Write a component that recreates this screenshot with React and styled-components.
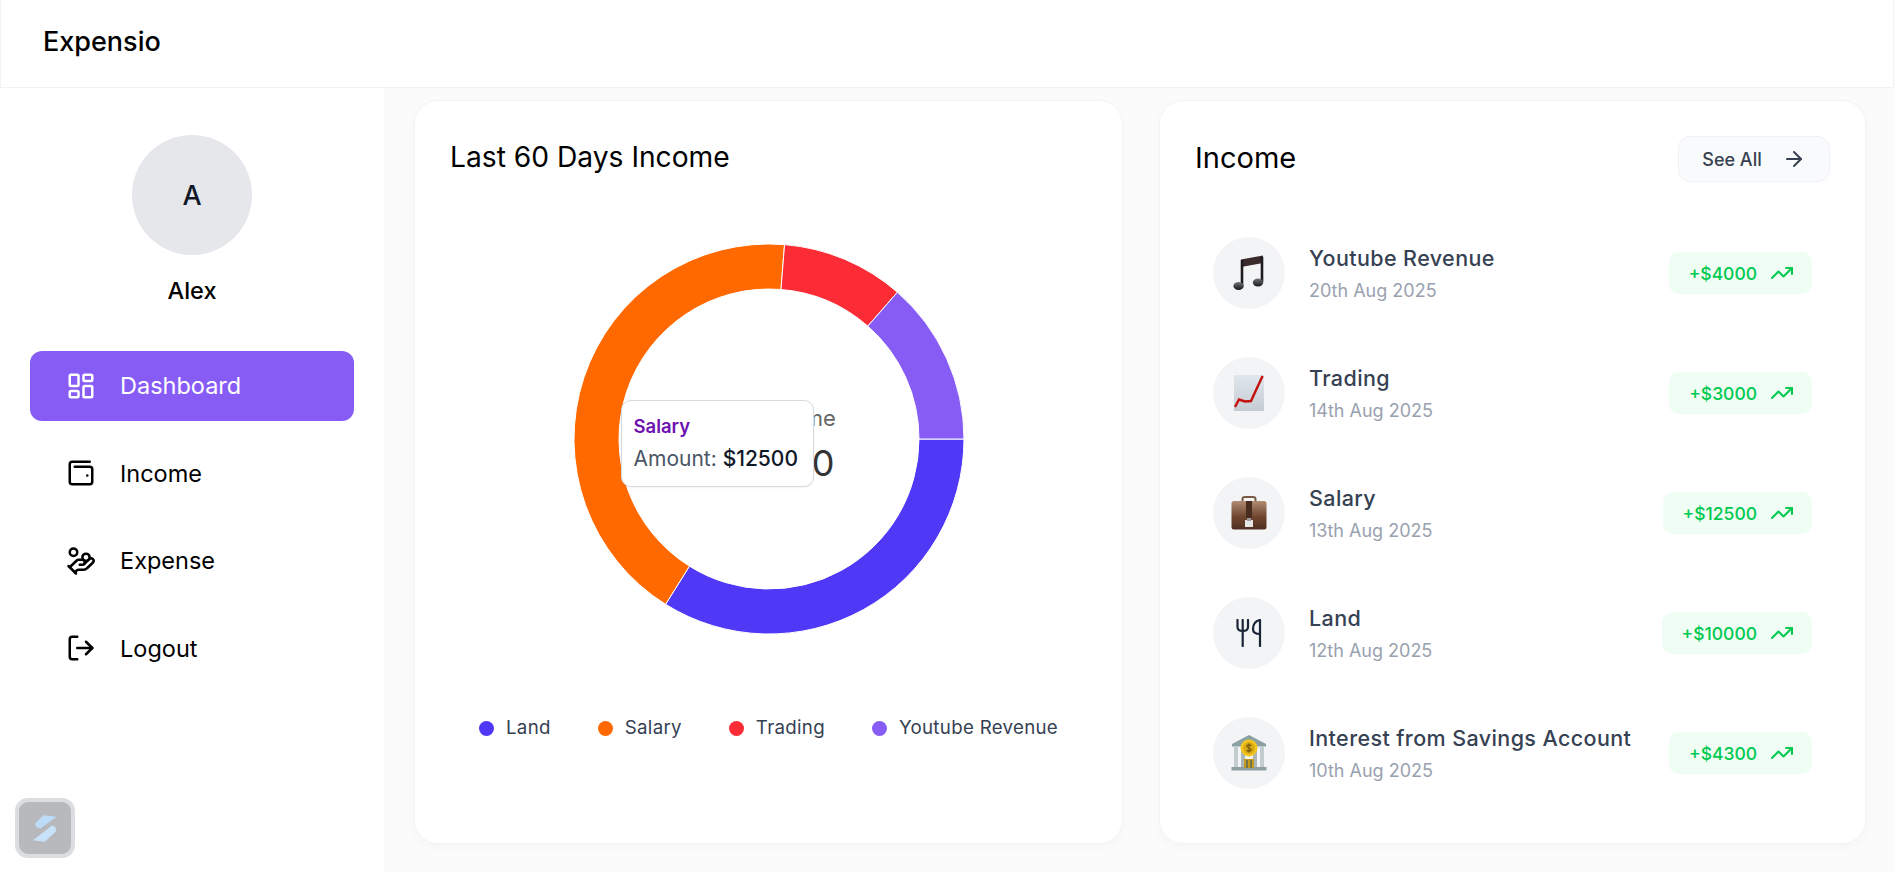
import React from 'react'
import styled, { createGlobalStyle } from 'styled-components'
import { LayoutDashboard, WalletMinimal, HandCoins, LogOut, ArrowRight, TrendingUp } from 'lucide-react'

const GlobalStyle = createGlobalStyle`
  * { box-sizing: border-box; }
  body {
    margin: 0;
    background: #fcfbfc;
    font-family: Inter, "Open Sans", sans-serif;
    overflow: hidden;
  }
`

const slices = [
  { name: 'Land', value: 10000, color: '#4f39f6' },
  { name: 'Salary', value: 12500, color: '#ff6900' },
  { name: 'Trading', value: 3000, color: '#fb2c36' },
  { name: 'Youtube Revenue', value: 4000, color: '#875cf5' },
]

const navItems = [
  { label: 'Dashboard', Icon: LayoutDashboard, active: true },
  { label: 'Income', Icon: WalletMinimal },
  { label: 'Expense', Icon: HandCoins },
  { label: 'Logout', Icon: LogOut },
]

function MusicIcon() {
  return (
    <svg width="32" height="38" viewBox="0 0 32 38">
      <defs>
        <linearGradient id="noteHead" x1="0" y1="0" x2="0" y2="1">
          <stop offset="0" stopColor="#6f7478" />
          <stop offset="1" stopColor="#15171a" />
        </linearGradient>
      </defs>
      <path d="M8 5.5 L30 1.5 V9 L8 13 Z" fill="#3a2a2c" />
      <path d="M9 6 V31 M29 3 V28" stroke="#1d1b1d" strokeWidth="2.6" fill="none" />
      <ellipse cx="5.6" cy="32" rx="5.2" ry="4" fill="url(#noteHead)" />
      <ellipse cx="25" cy="28.5" rx="5.2" ry="4" fill="url(#noteHead)" />
    </svg>
  )
}

function ChartIcon() {
  return (
    <svg width="32" height="36" viewBox="0 0 32 36">
      <defs>
        <linearGradient id="chartPaper" x1="0" y1="0" x2="0" y2="1">
          <stop offset="0" stopColor="#dfe6ec" />
          <stop offset="1" stopColor="#c6ccd3" />
        </linearGradient>
      </defs>
      <rect x="1" y="0" width="30" height="36" fill="url(#chartPaper)" />
      <path d="M2 32 L6 24.5 L12 26.5 L18 26 L24 13 L29.6 1" fill="none" stroke="#c4100c" strokeWidth="2.4" />
    </svg>
  )
}

function BriefcaseIcon() {
  return (
    <svg width="36" height="34" viewBox="0 0 36 34">
      <defs>
        <linearGradient id="caseBody" x1="0" y1="0" x2="0" y2="1">
          <stop offset="0" stopColor="#b08c72" />
          <stop offset="0.55" stopColor="#6f4630" />
          <stop offset="1" stopColor="#4f2f1f" />
        </linearGradient>
      </defs>
      <path d="M11.5 6 V3 Q11.5 1 14 1 H22 Q24.5 1 24.5 3 V6" fill="none" stroke="#7b5a45" strokeWidth="2" />
      <rect x="0.5" y="5" width="35" height="28.5" rx="2.5" fill="url(#caseBody)" />
      <rect x="15" y="5" width="6" height="17" fill="#4a2c1e" />
      <path d="M14 24 H22 V31 H14 Z" fill="#e6e6e6" />
      <rect x="16" y="22" width="4" height="3" fill="#9b9b9b" />
    </svg>
  )
}

function ForkIcon() {
  return (
    <svg width="26" height="28" viewBox="0 0 26 28">
      <path d="M1.5 1 V8 Q1.5 12 6.7 12 Q12 12 12 8 V1 M6.7 1 V27" fill="none" stroke="#1b2538" strokeWidth="2.2" strokeLinecap="round" />
      <path d="M24 1 V27 M24 1 Q17 2.5 17 10 Q17 15 24 15" fill="none" stroke="#1b2538" strokeWidth="2.2" strokeLinecap="round" />
    </svg>
  )
}

function BankIcon() {
  return (
    <svg width="36" height="36" viewBox="0 0 36 36">
      <path d="M18 0 L35 9 V11.5 H1 V9 Z" fill="#8ba0a3" />
      <rect x="3" y="12" width="4" height="20" fill="#c3cdd0" />
      <rect x="10" y="12" width="4" height="20" fill="#aab7ba" />
      <rect x="22" y="12" width="4" height="20" fill="#aab7ba" />
      <rect x="29" y="12" width="4" height="20" fill="#c3cdd0" />
      <rect x="0.5" y="32" width="35" height="3.5" fill="#8e9ea1" />
      <rect x="13" y="24" width="10" height="9" fill="#c49a1a" />
      <path d="M16 25 V33 M20 25 V33" stroke="#5a6a5a" strokeWidth="1.5" />
      <circle cx="18" cy="13" r="8.5" fill="#f2c51f" />
      <circle cx="18" cy="13" r="6" fill="#dcab14" />
      <path d="M20.4 10.6 Q18 9.2 16.2 10.4 Q15 11.8 18 13 Q21 14.2 19.8 15.8 Q17.8 16.9 15.6 15.4 M18 8.6 V17.4" fill="none" stroke="#7a5d10" strokeWidth="1.3" />
    </svg>
  )
}

const incomes = [
  { title: 'Youtube Revenue', date: '20th Aug 2025', amount: '+$4000', Emoji: MusicIcon },
  { title: 'Trading', date: '14th Aug 2025', amount: '+$3000', Emoji: ChartIcon },
  { title: 'Salary', date: '13th Aug 2025', amount: '+$12500', Emoji: BriefcaseIcon },
  { title: 'Land', date: '12th Aug 2025', amount: '+$10000', Emoji: ForkIcon },
  { title: 'Interest from Savings Account', date: '10th Aug 2025', amount: '+$4300', Emoji: BankIcon },
]

// recharts-like donut, starts at 3 o'clock and runs clockwise
function arcPath(startDeg, endDeg, outer, inner, cx, cy) {
  const rad = (d) => (d * Math.PI) / 180
  const pt = (r, d) => `${(cx + r * Math.cos(rad(d))).toFixed(2)} ${(cy + r * Math.sin(rad(d))).toFixed(2)}`
  const large = endDeg - startDeg > 180 ? 1 : 0
  return `M${pt(outer, startDeg)} A${outer} ${outer} 0 ${large} 1 ${pt(outer, endDeg)} L${pt(inner, endDeg)} A${inner} ${inner} 0 ${large} 0 ${pt(inner, startDeg)} Z`
}

function Donut() {
  const total = slices.reduce((sum, s) => sum + s.value, 0)
  let angle = 0
  return (
    <DonutSvg width="420" height="418" viewBox="0 0 420 418">
      {slices.map((s) => {
        const start = angle
        angle += (s.value / total) * 360
        return <path key={s.name} d={arcPath(start, angle, 195, 150, 210, 209)} fill={s.color} stroke="#fff" strokeWidth="1" />
      })}
      <CenterLabel x="210" y="196" textAnchor="middle">Total Income</CenterLabel>
      <CenterValue x="210" y="246" textAnchor="middle">$29500</CenterValue>
    </DonutSvg>
  )
}

export default function App() {
  return (
    <>
      <GlobalStyle />
      <Page>
        <Header>
          <Brand>Expensio</Brand>
        </Header>
        <Body>
          <Sidebar>
            <Avatar>A</Avatar>
            <UserName>Alex</UserName>
            <Nav>
              {navItems.map(({ label, Icon, active }) => (
                <NavItem key={label} $active={active}>
                  <Icon size={30} strokeWidth={2} />
                  {label}
                </NavItem>
              ))}
            </Nav>
            <DevBadge>
              <svg width="34" height="38" viewBox="0 0 34 38">
                <path d="M14 1 L32 3 L10 19 Q2 17 3 12 Z" fill="#bcdcf8" />
                <path d="M26 15 Q33 17 31 23 L16 37 L0 35 Z" fill="#c8e2fa" />
              </svg>
            </DevBadge>
          </Sidebar>
          <Main>
            <Card>
              <ChartTitle>Last 60 Days Income</ChartTitle>
              <ChartWrap>
                <Donut />
                <Tooltip>
                  <TooltipName>Salary</TooltipName>
                  <TooltipLine>Amount: <b>$12500</b></TooltipLine>
                </Tooltip>
              </ChartWrap>
              <Legend>
                {slices.map((s) => (
                  <LegendItem key={s.name}>
                    <Dot $color={s.color} />
                    {s.name}
                  </LegendItem>
                ))}
              </Legend>
            </Card>
            <Card>
              <CardHead>
                <CardTitle>Income</CardTitle>
                <SeeAll>See All <ArrowRight size={24} strokeWidth={2} /></SeeAll>
              </CardHead>
              <List>
                {incomes.map(({ title, date, amount, Emoji }) => (
                  <Row key={title}>
                    <IconCircle><Emoji /></IconCircle>
                    <RowText>
                      <RowTitle>{title}</RowTitle>
                      <RowDate>{date}</RowDate>
                    </RowText>
                    <Amount>{amount} <TrendingUp size={24} strokeWidth={2} /></Amount>
                  </Row>
                ))}
              </List>
            </Card>
          </Main>
        </Body>
      </Page>
    </>
  )
}

const Page = styled.div`
  height: 100vh;
  display: flex;
  flex-direction: column;
  color: #000;
`

const Header = styled.header`
  height: 88px;
  flex: none;
  display: flex;
  align-items: center;
  padding: 0 0 5px 42px;
  background: #fff;
  border: 1px solid #f2f2f3;
  border-top: 0;
`

const Brand = styled.div`
  font-size: 27px;
  font-weight: 500;
`

const Body = styled.div`
  flex: 1;
  display: flex;
  min-height: 0;
`

const Sidebar = styled.aside`
  width: 384px;
  flex: none;
  background: #fff;
  display: flex;
  flex-direction: column;
  align-items: center;
  padding: 47px 30px 0;
  position: relative;
`

const Avatar = styled.div`
  width: 120px;
  height: 120px;
  border-radius: 50%;
  background: #e5e7eb;
  color: #101828;
  font-size: 27px;
  font-weight: 500;
  display: flex;
  align-items: center;
  justify-content: center;
`

const UserName = styled.div`
  margin-top: 22px;
  font-size: 23.5px;
  line-height: 28px;
  font-weight: 500;
`

const Nav = styled.nav`
  width: 100%;
  margin-top: 46px;
  display: flex;
  flex-direction: column;
  gap: 18px;
`

const NavItem = styled.div`
  height: 69.5px;
  display: flex;
  align-items: center;
  gap: 24px;
  padding-left: 36px;
  border-radius: 12px;
  font-size: 23.5px;
  background: ${(p) => (p.$active ? '#875cf5' : 'transparent')};
  color: ${(p) => (p.$active ? '#fff' : '#000')};
`

const DevBadge = styled.div`
  position: absolute;
  left: 15px;
  bottom: 14px;
  width: 60px;
  height: 60px;
  border-radius: 13px;
  background: #b8b9bd;
  border: 4px solid #dcdde0;
  display: flex;
  align-items: center;
  justify-content: center;

  svg {
    width: 25px;
    height: 31px;
  }
`

const Main = styled.main`
  flex: 1;
  display: grid;
  grid-template-columns: 709px 707px;
  gap: 36px;
  padding: 12px 0 28px 30px;
  min-width: 0;
`

const Card = styled.section`
  background: #fff;
  border-radius: 24px;
  padding: 35px;
  border: 1px solid #f4f4f6;
  box-shadow: 0 4px 8px rgba(120, 120, 140, 0.04);
  display: flex;
  flex-direction: column;
  min-height: 0;
`

const ChartTitle = styled.h2`
  margin: 1px 0 0;
  font-size: 28.2px;
  line-height: 40px;
  font-weight: 400;
`

const ChartWrap = styled.div`
  position: relative;
  margin-top: 53px;
  height: 418px;
  display: flex;
  justify-content: center;
`

const DonutSvg = styled.svg`
  display: block;
`

const CenterLabel = styled.text`
  font-size: 22px;
  fill: #666;
`

const CenterValue = styled.text`
  font-size: 36px;
  letter-spacing: -1px;
  fill: #333;
`

const Tooltip = styled.div`
  position: absolute;
  top: 170px;
  left: calc(50% - 148px);
  width: 193px;
  height: 87px;
  padding: 13px 12px;
  background: #fff;
  border: 1px solid #d8d9e0;
  border-radius: 10px;
  box-shadow: 0 1px 2px rgba(0, 0, 0, 0.05);
`

const TooltipName = styled.div`
  font-size: 18.5px;
  line-height: 24px;
  font-weight: 600;
  color: #6e11b0;
`

const TooltipLine = styled.div`
  margin-top: 7px;
  font-size: 21px;
  line-height: 28px;
  color: #4a5565;
  white-space: nowrap;

  b {
    font-weight: 500;
    color: #101828;
  }
`

const Legend = styled.div`
  margin-top: 68px;
  display: flex;
  justify-content: center;
  gap: 47px;
`

const LegendItem = styled.div`
  display: flex;
  align-items: center;
  gap: 12px;
  font-size: 18.7px;
  letter-spacing: 0.3px;
  line-height: 24px;
  color: #364153;
  white-space: nowrap;
`

const Dot = styled.span`
  width: 15px;
  height: 15px;
  border-radius: 50%;
  background: ${(p) => p.$color};
`

const CardHead = styled.div`
  display: flex;
  align-items: center;
  justify-content: space-between;
`

const CardTitle = styled.h2`
  margin: 0;
  position: relative;
  top: -1px;
  font-size: 29px;
  line-height: 40px;
  font-weight: 400;
`

const SeeAll = styled.button`
  width: 152px;
  height: 46px;
  display: flex;
  align-items: center;
  justify-content: center;
  gap: 20px;
  font-family: inherit;
  font-size: 18px;
  font-weight: 500;
  color: #374151;
  background: #f9fafb;
  border: 1px solid #f0f1f4;
  border-radius: 12px;
`

const List = styled.div`
  margin-top: 31px;
  display: flex;
  flex-direction: column;
`

const Row = styled.div`
  height: 120px;
  padding: 0 18px;
  display: flex;
  align-items: center;
  gap: 24px;
`

const IconCircle = styled.div`
  width: 72px;
  height: 72px;
  flex: none;
  border-radius: 50%;
  background: #f3f4f6;
  display: flex;
  align-items: center;
  justify-content: center;
`

const RowText = styled.div`
  flex: 1;
  min-width: 0;
`

const RowTitle = styled.div`
  font-size: 21.5px;
  letter-spacing: 0.4px;
  line-height: 28px;
  font-weight: 500;
  color: #364153;
`

const RowDate = styled.div`
  margin-top: 7px;
  font-size: 18px;
  line-height: 24px;
  color: #99a1af;
`

const Amount = styled.div`
  height: 42px;
  display: flex;
  align-items: center;
  gap: 13px;
  padding: 0 18px 0 20px;
  border-radius: 10px;
  background: #f0fdf4;
  color: #00c950;
  font-size: 17.5px;
  font-weight: 500;
`
